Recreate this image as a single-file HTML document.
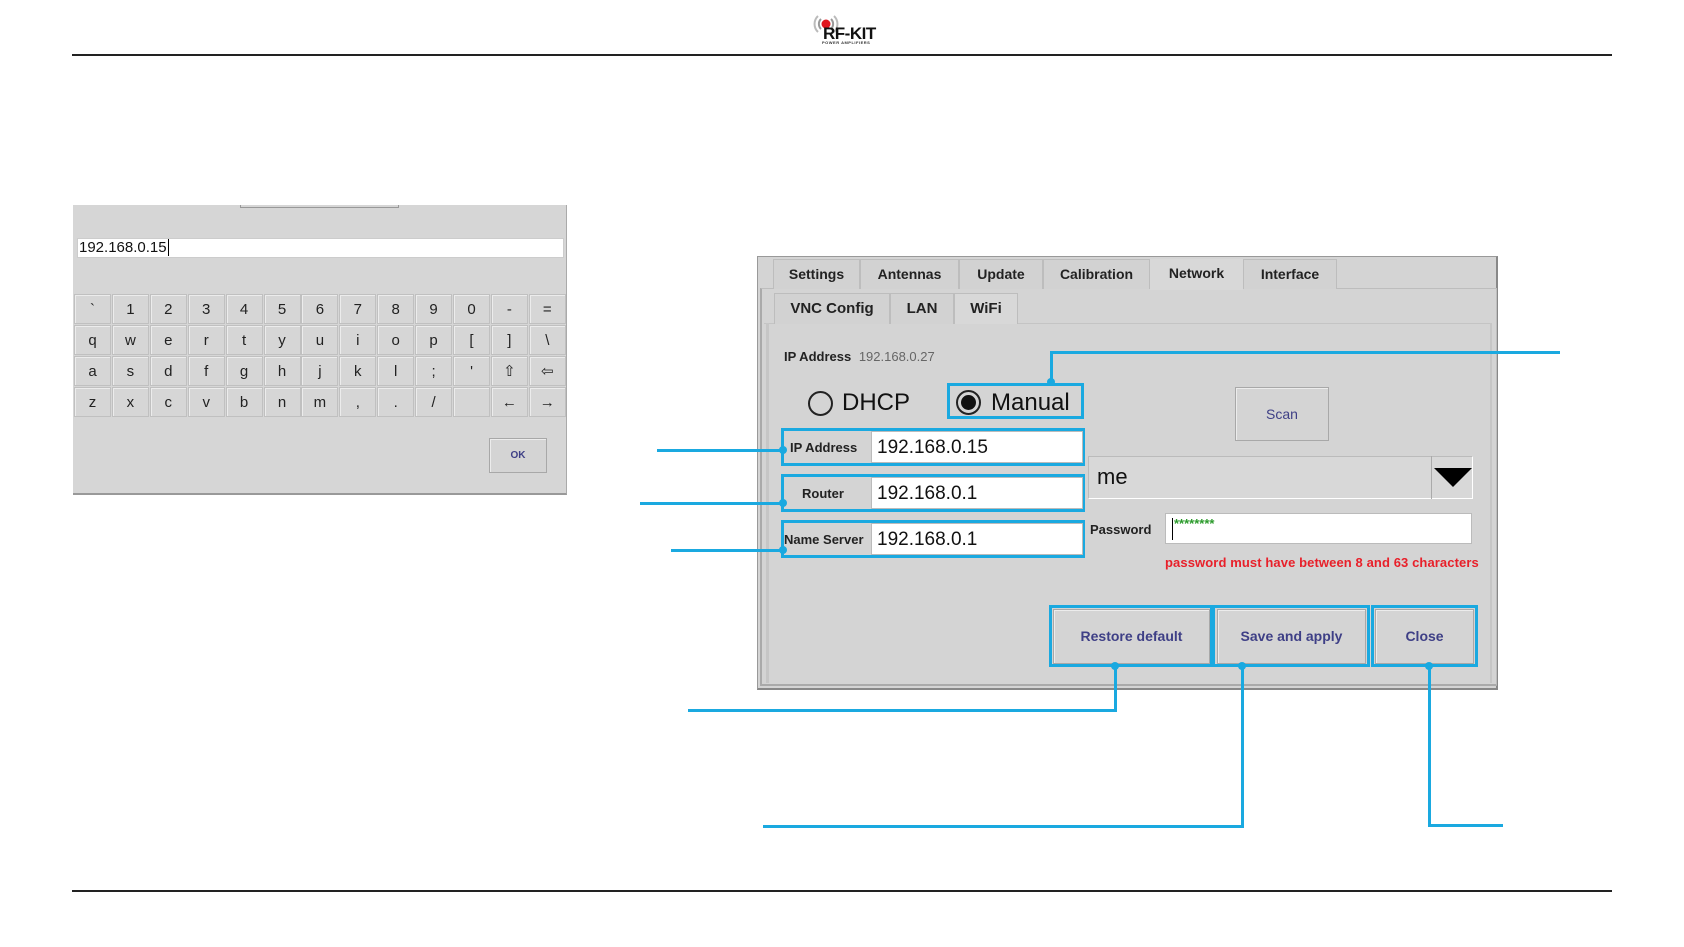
<!DOCTYPE html>
<html><head><meta charset="utf-8"><style>
*{margin:0;padding:0;box-sizing:border-box}
body{width:1684px;height:947px;background:#fff;position:relative;overflow:hidden;font-family:"Liberation Sans",sans-serif}
.a{position:absolute}
.hl{background:#222;height:2px}
.key{position:absolute;width:37px;height:30px;background:#d6d6d6;border:1px solid #c0c0c0;box-shadow:inset 1px 1px 0 #ececec;font-size:15px;color:#222;text-align:center;line-height:29px}
.tab{position:absolute;top:259px;height:30px;background:#d2d2d2;border:1px solid #bdbdbd;border-bottom:none;font-size:14px;font-weight:bold;color:#222;text-align:center;line-height:28px}
.sub{position:absolute;top:293px;height:31px;background:#d2d2d2;border:1px solid #bdbdbd;border-bottom:none;font-size:15px;font-weight:bold;color:#222;text-align:center;line-height:30px}
.blue{position:absolute;border:3px solid #1aa9e0}
.bl{position:absolute;background:#1aa9e0}
.dot{position:absolute;width:8px;height:8px;border-radius:50%;background:#1aa9e0}
.inp{position:absolute;background:#fff;border:1px solid #bbb;font-size:19px;color:#111;padding-left:5px}
.btn{position:absolute;background:#d4d4d4;border:1px solid #a8a8a8;box-shadow:inset 1px 1px 0 #ececec;color:#3e3f86;font-weight:bold;font-size:14px;text-align:center}
.lbl{position:absolute;font-size:13px;font-weight:bold;color:#222}
</style></head><body>
<!-- header -->
<div class="a" style="left:813px;top:12px;width:26px;height:26px">
<svg width="26" height="26"><path d="M5 4 A11 11 0 0 0 5 20" stroke="#bbb" stroke-width="2" fill="none"/><path d="M21 4 A11 11 0 0 1 21 20" stroke="#bbb" stroke-width="2" fill="none"/><path d="M8 7 A7 7 0 0 0 8 17" stroke="#999" stroke-width="2" fill="none"/><path d="M18 7 A7 7 0 0 1 18 17" stroke="#999" stroke-width="2" fill="none"/><circle cx="13" cy="12" r="4.5" fill="#e0141c"/></svg></div>
<div class="a" style="left:823px;top:24px;font-size:17px;font-weight:900;color:#111;letter-spacing:-0.5px">RF-KIT</div>
<div class="a" style="left:822px;top:40px;font-size:4px;font-weight:bold;color:#333;letter-spacing:0.5px">POWER AMPLIFIERS</div>
<div class="a hl" style="left:72px;top:54px;width:1540px"></div>
<div class="a hl" style="left:72px;top:890px;width:1540px"></div>

<!-- keyboard panel -->
<div class="a" style="left:73px;top:205px;width:494px;height:290px;background:#d6d6d6;border-right:1px solid #aaa;border-bottom:2px solid #999"></div>
<div class="a" style="left:240px;top:205px;width:159px;height:3px;background:#d6d6d6;border:1px solid #999;border-top:none"></div>
<div class="a" style="left:77px;top:238px;width:487px;height:20px;background:#fff;border:1px solid #ccc;font-size:15px;line-height:18px;padding-left:1px;color:#111">192.168.0.15<span style="border-left:1px solid #000;margin-left:1px"></span></div>
<div id="kb"></div>
<div class="btn" style="left:489px;top:438px;width:58px;height:35px;line-height:33px;font-size:10px">OK</div>

<!-- dialog -->
<div class="a" style="left:1013px;top:256px;width:239px;height:3px;background:#d4d4d4;border:1px solid #777;border-top:none"></div>
<div class="a" style="left:757px;top:256px;width:741px;height:434px;background:#d4d4d4;border:1px solid #999;border-right:2px solid #888;border-bottom:2px solid #888"></div>
<div class="a" style="left:760px;top:288px;width:737px;height:398px;border:1px solid #bdbdbd;border-bottom:2px solid #aaa;border-left:2px solid #aaa"></div>
<div class="tab" style="left:773px;width:87px">Settings</div>
<div class="tab" style="left:860px;width:99px">Antennas</div>
<div class="tab" style="left:959px;width:84px">Update</div>
<div class="tab" style="left:1043px;width:107px">Calibration</div>
<div class="tab" style="left:1150px;width:93px;background:#d8d8d8;border:none;height:31px">Network</div>
<div class="tab" style="left:1243px;width:94px">Interface</div>
<div class="a" style="left:764px;top:323px;width:728px;height:1px;background:#c4c4c4"></div>
<div class="sub" style="left:774px;width:116px">VNC Config</div>
<div class="sub" style="left:890px;width:64px">LAN</div>
<div class="sub" style="left:954px;width:64px;background:#d8d8d8">WiFi</div>
<div class="a" style="left:766px;top:323px;width:3px;height:360px;background:#c6c6c6"></div>
<div class="a" style="left:1490px;top:323px;width:2px;height:360px;background:#c6c6c6"></div>

<div class="lbl" style="left:784px;top:349px">IP Address <span style="color:#666;font-weight:normal;margin-left:4px">192.168.0.27</span></div>
<div class="a" style="left:808px;top:391px;width:25px;height:25px;border:2px solid #222;border-radius:50%"></div>
<div class="a" style="left:842px;top:389px;font-size:24px;color:#111">DHCP</div>
<div class="blue" style="left:947px;top:383px;width:137px;height:36px"></div>
<div class="a" style="left:956px;top:390px;width:25px;height:25px;border:2px solid #222;border-radius:50%"><div class="a" style="left:3px;top:3px;width:15px;height:15px;border-radius:50%;background:#111"></div></div>
<div class="a" style="left:991px;top:389px;font-size:24px;color:#111">Manual</div>
<div class="btn" style="left:1235px;top:387px;width:94px;height:54px;line-height:52px;font-size:14px;font-weight:normal">Scan</div>

<div class="blue" style="left:781px;top:428px;width:304px;height:38px"></div>
<div class="lbl" style="left:790px;top:440px">IP Address</div>
<div class="inp" style="left:871px;top:431px;width:212px;height:32px;line-height:31px">192.168.0.15</div>
<div class="blue" style="left:781px;top:474px;width:304px;height:38px"></div>
<div class="lbl" style="left:802px;top:486px">Router</div>
<div class="inp" style="left:871px;top:477px;width:212px;height:32px;line-height:31px">192.168.0.1</div>
<div class="blue" style="left:781px;top:520px;width:304px;height:38px"></div>
<div class="lbl" style="left:784px;top:532px">Name Server</div>
<div class="inp" style="left:871px;top:523px;width:212px;height:32px;line-height:31px">192.168.0.1</div>

<div class="a" style="left:1088px;top:456px;width:385px;height:43px;background:#d8d8d8;border-bottom:1px solid #fff;border-right:1px solid #fff;border-top:1px solid #bbb;border-left:1px solid #bbb;font-size:22px;line-height:40px;padding-left:8px;color:#111">me</div>
<div class="a" style="left:1431px;top:456px;width:1px;height:43px;background:#aaa"></div>
<svg class="a" style="left:1434px;top:468px" width="38" height="20"><polygon points="0,0 38,0 19,19" fill="#000"/></svg>
<div class="lbl" style="left:1090px;top:522px">Password</div>
<div class="a" style="left:1165px;top:513px;width:307px;height:31px;background:#fff;border:1px solid #bbb"><div class="a" style="left:6px;top:4px;width:1px;height:22px;background:#000"></div><div class="a" style="left:8px;top:2px;font-size:13px;color:#2a9a2a;font-weight:bold">********</div></div>
<div class="a" style="left:1165px;top:555px;font-size:13px;font-weight:bold;color:#e8202a;letter-spacing:0.1px">password must have between 8 and 63 characters</div>

<div class="btn" style="left:1053px;top:609px;width:157px;height:55px;line-height:53px">Restore default</div>
<div class="btn" style="left:1217px;top:609px;width:149px;height:55px;line-height:53px">Save and apply</div>
<div class="btn" style="left:1375px;top:609px;width:99px;height:55px;line-height:53px">Close</div>
<div class="blue" style="left:1049px;top:605px;width:164px;height:62px"></div>
<div class="blue" style="left:1212px;top:605px;width:158px;height:62px"></div>
<div class="blue" style="left:1371px;top:605px;width:107px;height:62px"></div>

<!-- leader lines -->
<div class="bl" style="left:1050px;top:351px;width:510px;height:3px"></div>
<div class="bl" style="left:1050px;top:351px;width:3px;height:32px"></div>
<div class="dot" style="left:1047px;top:378px"></div>
<div class="bl" style="left:657px;top:449px;width:126px;height:3px"></div>
<div class="dot" style="left:779px;top:446px"></div>
<div class="bl" style="left:640px;top:502px;width:143px;height:3px"></div>
<div class="dot" style="left:779px;top:499px"></div>
<div class="bl" style="left:671px;top:549px;width:112px;height:3px"></div>
<div class="dot" style="left:779px;top:546px"></div>

<div class="dot" style="left:1111px;top:662px"></div>
<div class="bl" style="left:1114px;top:666px;width:3px;height:45px"></div>
<div class="bl" style="left:688px;top:709px;width:429px;height:3px"></div>
<div class="dot" style="left:1238px;top:662px"></div>
<div class="bl" style="left:1241px;top:666px;width:3px;height:161px"></div>
<div class="bl" style="left:763px;top:825px;width:481px;height:3px"></div>
<div class="dot" style="left:1425px;top:662px"></div>
<div class="bl" style="left:1428px;top:666px;width:3px;height:161px"></div>
<div class="bl" style="left:1428px;top:824px;width:75px;height:3px"></div>

<script>
var rows=[["`","1","2","3","4","5","6","7","8","9","0","-","="],["q","w","e","r","t","y","u","i","o","p","[","]","\\"],["a","s","d","f","g","h","j","k","l",";","'","⇧","⇦"],["z","x","c","v","b","n","m",",",".","/","","←","→"]];
var h="";rows.forEach(function(r,i){r.forEach(function(k,j){h+='<div class="key" style="left:'+(74+j*37.9)+'px;top:'+(294+i*31)+'px">'+k+'</div>';});});
document.getElementById("kb").innerHTML=h;
</script>
</body></html>
